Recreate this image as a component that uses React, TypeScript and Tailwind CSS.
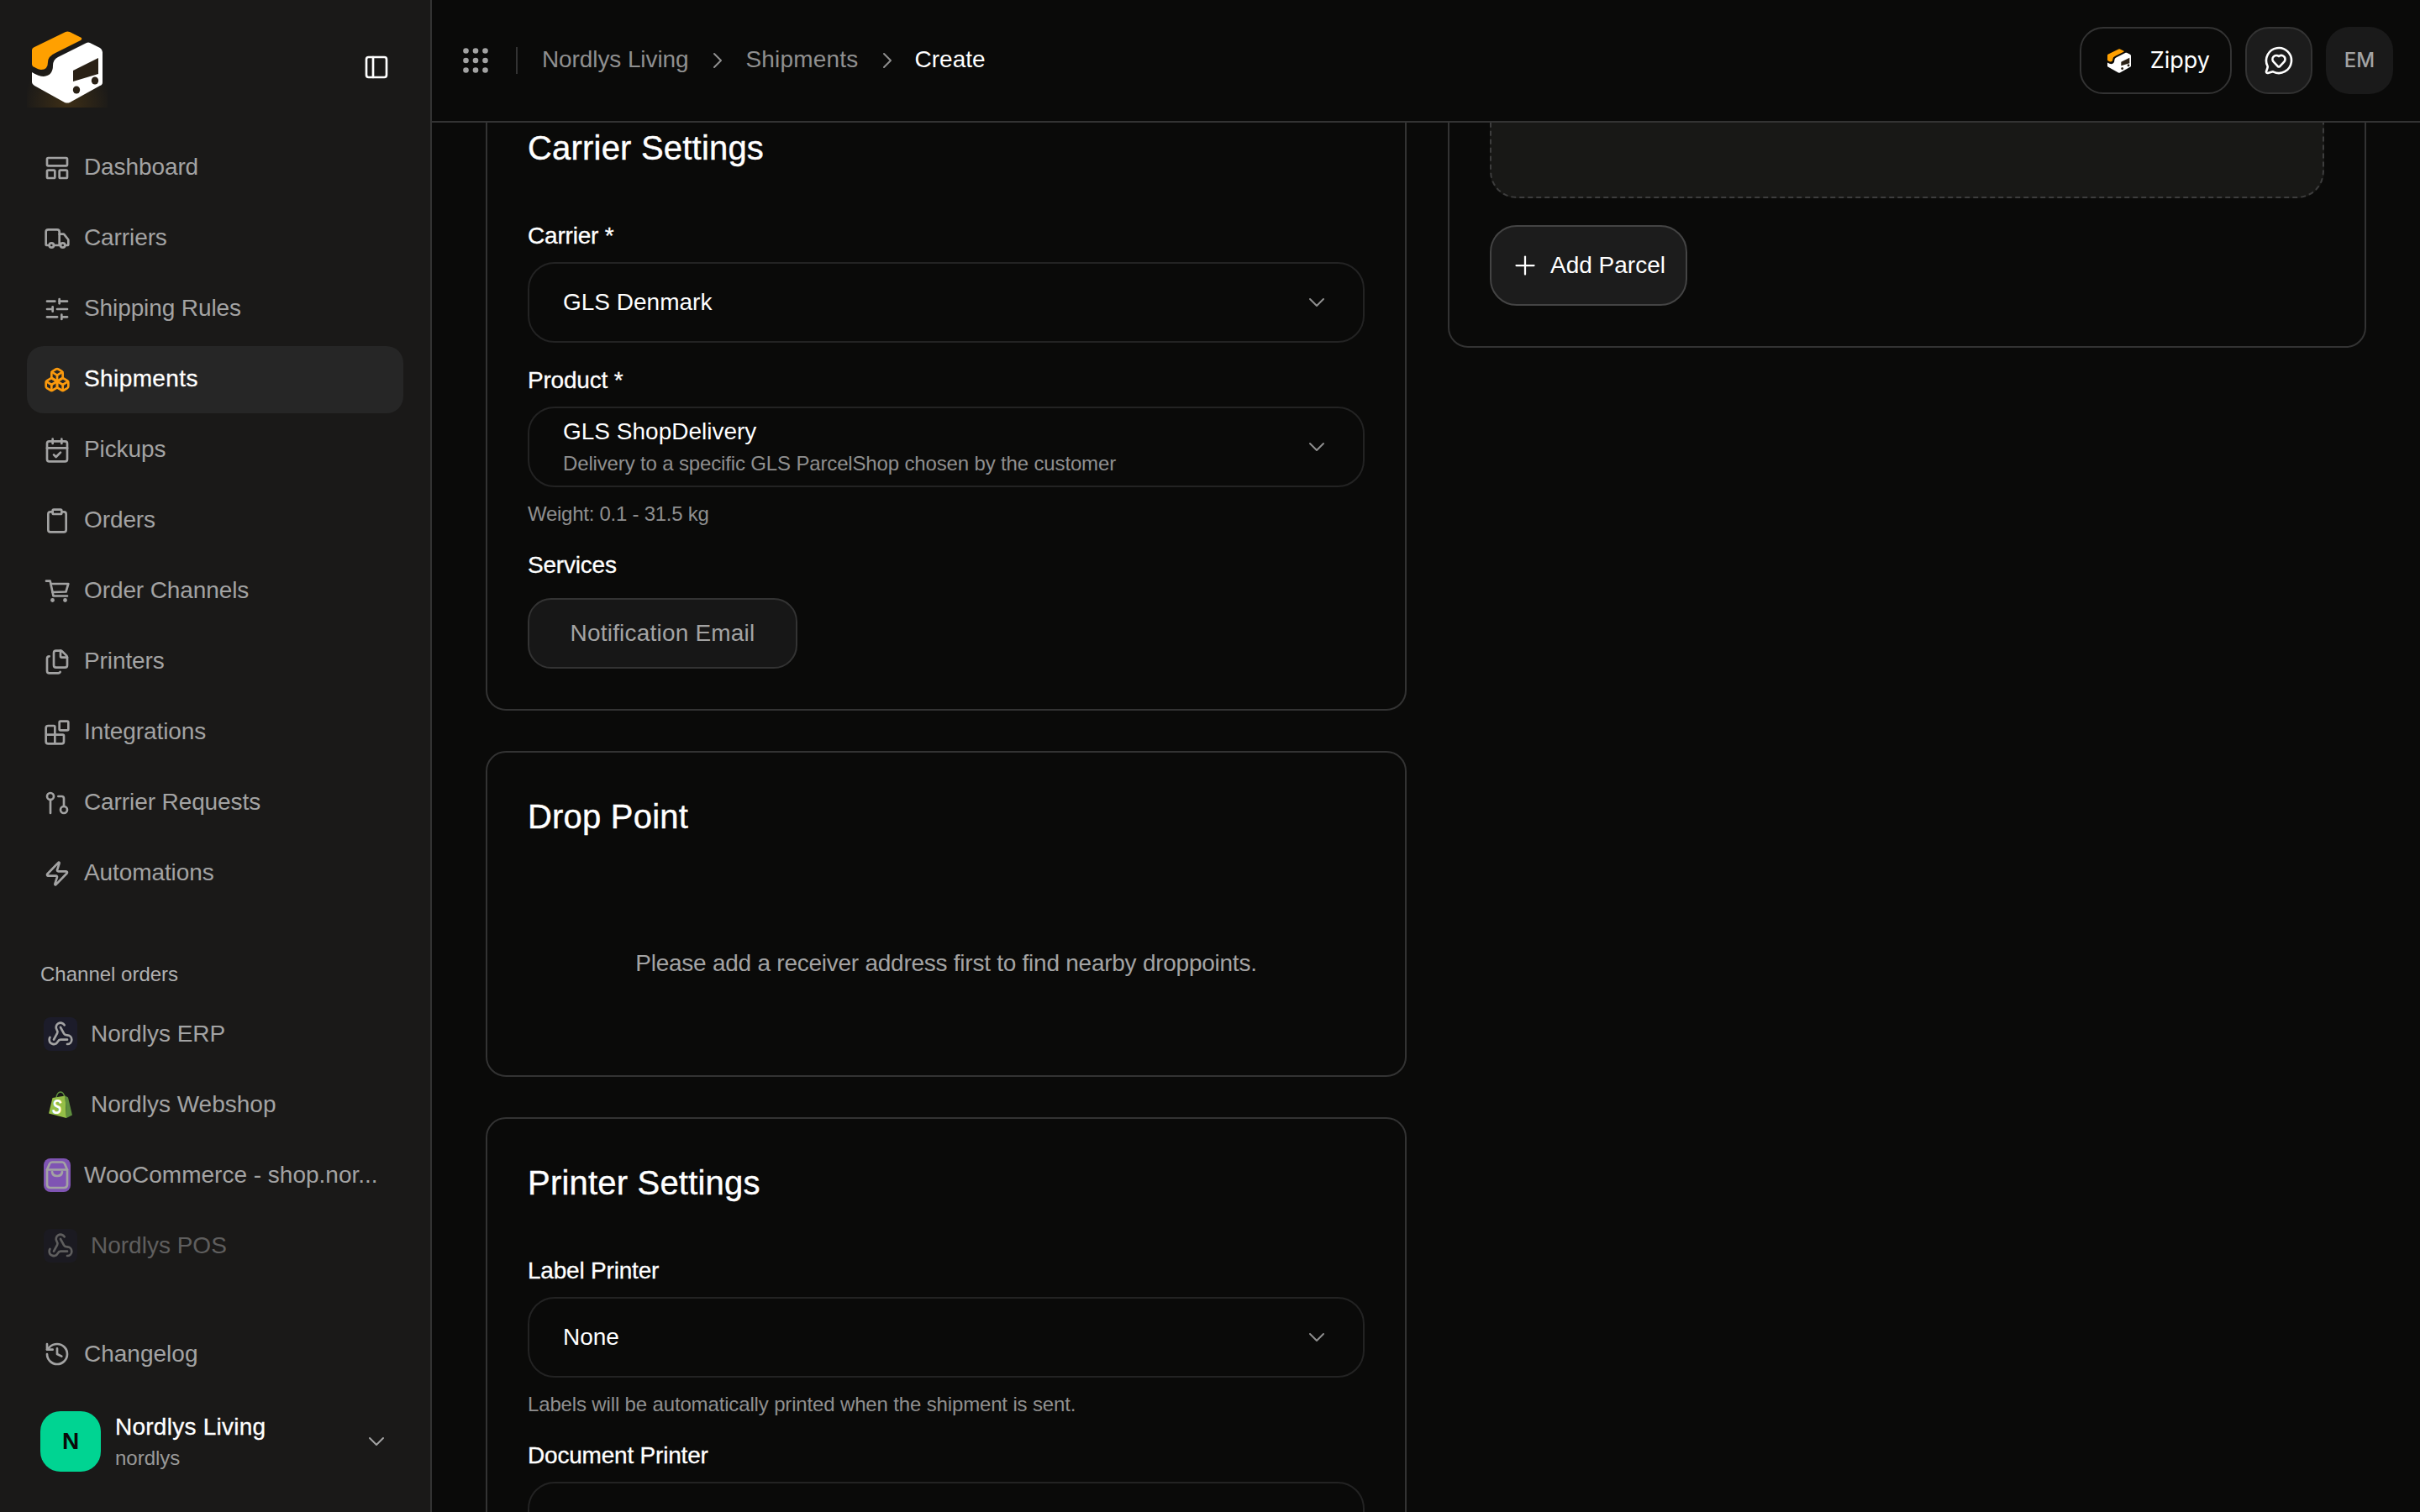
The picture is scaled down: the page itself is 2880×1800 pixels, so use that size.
import {
  Blocks,
  Boxes,
  CalendarCheck,
  ChevronDown,
  ChevronRight,
  Clipboard,
  Files,
  GitPullRequest,
  History,
  LayoutPanelTop,
  MessageCircleHeart,
  PanelLeft,
  Plus,
  SlidersHorizontal,
  Truck,
  Webhook,
  Zap,
} from "lucide-react"

function CartIcon({ className = "" }: { size?: number; strokeWidth?: number; className?: string }) {
  return (
    <svg viewBox="0 0 32 32" className={`w-[32px] h-[32px] ${className}`} fill="none" stroke="currentColor" strokeWidth="2.67" strokeLinecap="round" strokeLinejoin="round">
      <path d="M3 3.7 H7.7 L11.5 21.5 H28" />
      <path d="M8.6 7 H29.3 L26.5 16.5 L10.5 17" />
      <circle cx="10.5" cy="26.5" r="2.4" fill="currentColor" stroke="none" />
      <circle cx="25.5" cy="26.5" r="2.4" fill="currentColor" stroke="none" />
    </svg>
  )
}

const nav = [
  { label: "Dashboard", icon: LayoutPanelTop },
  { label: "Carriers", icon: Truck },
  { label: "Shipping Rules", icon: SlidersHorizontal },
  { label: "Shipments", icon: Boxes, active: true },
  { label: "Pickups", icon: CalendarCheck },
  { label: "Orders", icon: Clipboard },
  { label: "Order Channels", icon: CartIcon },
  { label: "Printers", icon: Files },
  { label: "Integrations", icon: Blocks },
  { label: "Carrier Requests", icon: GitPullRequest },
  { label: "Automations", icon: Zap },
]

function LogoShapes() {
  return (
    <>
      <path
        d="M38 60 Q38 57 41 56 L78 38 Q80 37 83 38 L97 45 Q98 47 96 48 L66 63 Q57 67 57 74 Q57 83 49 83 Q46 83 41 80 Q38 79 38 76 Z"
        fill="#ffa000"
      />
      <path
        d="M38 86 Q46 91 52 91 Q63 90 63 78 Q63 71 69 68 L103 51 Q105 50 107 51 L119 57 Q122 59 122 62 L122 98 Q122 101 119 102 L83 122 Q80 123 77 122 L41 102 Q38 100 38 98 Z"
        fill="#ffffff"
      />
      <path d="M87 84 L117 69 L117 88 L87 97 Z" fill="#2a2116" />
      <ellipse cx="91" cy="107" rx="4.2" ry="4.6" fill="#2a2116" />
      <ellipse cx="113" cy="96" rx="4.2" ry="4.6" fill="#2a2116" />
    </>
  )
}

function Logo() {
  return (
    <svg viewBox="32 32 96 96" className="w-[96px] h-[96px]">
      <defs>
        <radialGradient id="glow" cx="50%" cy="95%" r="55%">
          <stop offset="0%" stopColor="#f59e0b" stopOpacity="0.16" />
          <stop offset="100%" stopColor="#f59e0b" stopOpacity="0" />
        </radialGradient>
      </defs>
      <rect x="32" y="32" width="96" height="96" fill="url(#glow)" />
      <LogoShapes />
    </svg>
  )
}

function Shopify() {
  return (
    <svg viewBox="0 0 30 32" className="w-[30px] h-[32px]">
      <path d="M10 8 Q11 1 15 1 Q19 1 20 8" fill="none" stroke="#5e8e3e" strokeWidth="1.4" />
      <path d="M1 26.5 L5.5 8 L20.5 5.5 L22 32 Z" fill="#95bf47" />
      <path d="M20.5 5.5 L24 7.5 L29 28.5 L22 32 Z" fill="#5e8e3e" />
      <text
        x="5"
        y="26.5"
        fontSize="23"
        fontWeight="700"
        fontStyle="italic"
        fill="#ffffff"
        textLength="11.5"
        lengthAdjust="spacingAndGlyphs"
        fontFamily="'Liberation Sans', sans-serif"
      >
        S
      </text>
    </svg>
  )
}

function GridDots() {
  const points = [3.5, 15, 26.5]
  return (
    <svg viewBox="0 0 30 30" className="w-[30px] h-[30px]" fill="#a3a3a3">
      {points.map((y) => points.map((x) => <circle key={`${x}-${y}`} cx={x} cy={y} r="3.3" />))}
    </svg>
  )
}

function WooIcon() {
  return (
    <div className="w-[32px] h-[40px] shrink-0 rounded-[8px] bg-[#7f54b3]">
      <svg viewBox="0 0 32 40" className="w-[32px] h-[40px]" fill="none" stroke="#a3a3a3" strokeWidth="2.7" strokeLinecap="round" strokeLinejoin="round">
        <path d="M4 13.5 L7 6.5 Q8 4.5 10 4.5 H22 Q24 4.5 25 6.5 L28 13.5 V31 Q28 35 24 35 H8 Q4 35 4 31 Z" />
        <path d="M4 13.5 H28" />
        <path d="M10 16 Q10.5 21 16 21 Q21.5 21 22 16" />
      </svg>
    </div>
  )
}

function Field({ label, className = "", children }: { label: string; className?: string; children: React.ReactNode }) {
  return (
    <div className={className}>
      <div className="h-[40px] leading-[42px] text-[28px] text-white tracking-[-0.2px] [-webkit-text-stroke:0.3px_currentColor]">{label}</div>
      {children}
    </div>
  )
}

function Select({ value, sub }: { value?: string; sub?: string }) {
  return (
    <div className="mt-[12px] h-[96px] rounded-[32px] border-2 border-[#232323] flex items-center justify-between pl-[40px] pr-[39px]">
      <div>
        {value && <div className="text-[28px] leading-[36px] text-white">{value}</div>}
        {sub && <div className="text-[24px] leading-[32px] mt-[4px] text-[#8f8f8f] tracking-[-0.15px]">{sub}</div>}
      </div>
      <ChevronDown size={32} strokeWidth={1.5} className="text-[#8f8f8f]" />
    </div>
  )
}

function Card({ title, children }: { title: string; children: React.ReactNode }) {
  return (
    <section className="rounded-[24px] border-2 border-[#333333] p-[48px]">
      <h2 className="text-[40px] leading-[56px] text-white tracking-[0.2px] [-webkit-text-stroke:0.4px_currentColor]">{title}</h2>
      {children}
    </section>
  )
}

export default function App() {
  return (
    <div className="flex h-screen w-screen overflow-hidden bg-[#0a0a09] text-[28px]" style={{ fontFamily: "'Liberation Sans', sans-serif" }}>
      {/* Sidebar */}
      <aside className="w-[514px] shrink-0 h-full flex flex-col bg-[#1a1918] border-r-2 border-[#333333] pb-[48px]">
        <div className="flex items-center justify-between pl-[32px] pr-[48px] pt-[32px] mb-[32px]">
          <Logo />
          <PanelLeft size={32} strokeWidth={2} className="text-white" />
        </div>

        <nav className="flex flex-col gap-[4px] px-[32px]">
          {nav.map((item) => {
            const Icon = item.icon
            return (
              <div
                key={item.label}
                className={`h-[80px] flex items-center gap-[16px] pl-[20px] rounded-[20px] ${item.active ? "bg-[#262626] text-white tracking-[0.4px] [-webkit-text-stroke:0.3px_currentColor]" : "text-[#a3a3a3] tracking-[-0.1px]"}`}
              >
                <Icon size={32} strokeWidth={2} className={item.active ? "text-[#fb9a0e]" : ""} />
                <span className="pb-[2px]">{item.label}</span>
              </div>
            )
          })}
        </nav>

        <div className="mt-[64px] pl-[48px] h-[32px] leading-[32px] text-[24px] text-[#b0b0b0]">Channel orders</div>
        <div className="mt-[15px] flex flex-col gap-[4px] px-[32px] text-[#a3a3a3]">
          <div className="h-[80px] flex items-center gap-[16px] pl-[20px]">
            <div className="w-[40px] h-[40px] rounded-[8px] bg-[#1c1c2a] flex items-center justify-center">
              <Webhook size={32} strokeWidth={2} />
            </div>
            <span>Nordlys ERP</span>
          </div>
          <div className="h-[80px] flex items-center gap-[16px] pl-[20px]">
            <div className="w-[40px] h-[40px] flex items-center justify-center">
              <Shopify />
            </div>
            <span>Nordlys Webshop</span>
          </div>
          <div className="h-[80px] flex items-center gap-[16px] pl-[20px]">
            <WooIcon />
            <span className="whitespace-nowrap">WooCommerce - shop.nor...</span>
          </div>
          <div className="h-[80px] flex items-center gap-[16px] pl-[20px] opacity-50">
            <div className="w-[40px] h-[40px] rounded-[8px] bg-[#1c1c2a] flex items-center justify-center">
              <Webhook size={32} strokeWidth={2} />
            </div>
            <span>Nordlys POS</span>
          </div>
        </div>

        <div className="mt-auto px-[32px]">
          <div className="h-[80px] flex items-center gap-[16px] pl-[20px] text-[#a3a3a3]">
            <History size={32} strokeWidth={2} />
            <span>Changelog</span>
          </div>
        </div>
        <div className="mt-[28px] flex items-center pl-[48px] pr-[48px]">
          <div className="w-[72px] h-[72px] rounded-[24px] bg-[#00d492] flex items-center justify-center text-[28px] font-bold text-[#0a0a0a]">N</div>
          <div className="ml-[17px]">
            <div className="text-[28px] leading-[36px] text-white tracking-[0.25px] [-webkit-text-stroke:0.3px_currentColor]">Nordlys Living</div>
            <div className="text-[24px] leading-[32px] mt-[3px] text-[#999999]">nordlys</div>
          </div>
          <ChevronDown size={32} strokeWidth={1.5} className="ml-auto text-[#a3a3a3]" />
        </div>
      </aside>

      <div className="flex-1 min-w-0 flex flex-col">
        {/* Top bar */}
        <header className="h-[146px] shrink-0 border-b-2 border-[#333333] flex items-center justify-between pl-[37px] pr-[32px]">
          <div className="flex items-center">
            <GridDots />
            <div className="w-[2px] h-[32px] bg-[#333333] ml-[33px] mr-[29px]" />
            <span className="text-[#8f8f8f] tracking-[-0.1px] pb-[2px]">Nordlys Living</span>
            <ChevronRight size={32} strokeWidth={1.5} className="text-[#8f8f8f] ml-[19px] mr-[17px]" />
            <span className="text-[#8f8f8f] tracking-[0.2px] pb-[2px]">Shipments</span>
            <ChevronRight size={32} strokeWidth={1.5} className="text-[#8f8f8f] ml-[18px] mr-[17px]" />
            <span className="text-white pb-[2px]">Create</span>
          </div>
          <div className="flex items-center gap-[16px]" style={{ fontFamily: "Inter, sans-serif" }}>
            <div className="h-[80px] rounded-[28px] border-2 border-[#333333] flex items-center pl-[31px] pr-[24px] gap-[23px] text-white text-[27px]">
              <svg viewBox="38 37 84 86" className="w-[28px] h-[29px]">
                <LogoShapes />
              </svg>
              <span>Zippy</span>
            </div>
            <div className="w-[80px] h-[80px] rounded-[28px] border-2 border-[#333333] bg-[#1c1c1c] flex items-center justify-center">
              <MessageCircleHeart size={36} strokeWidth={1.75} className="text-white" />
            </div>
            <div className="w-[80px] h-[80px] rounded-[28px] bg-[#1a1a1a] flex items-center justify-center text-[24px] font-medium text-[#a3a3a3]">EM</div>
          </div>
        </header>

        {/* Form, scrolled */}
        <main className="flex-1 min-h-0 overflow-hidden px-[64px]">
          <div className="grid grid-cols-[1096px_minmax(0,1fr)] gap-[49px] items-start -mt-[48px]">
            <div className="flex flex-col gap-[48px]">
              <Card title="Carrier Settings">
                <Field label="Carrier *" className="mt-[56px]">
                  <Select value="GLS Denmark" />
                </Field>
                <Field label="Product *" className="mt-[24px]">
                  <Select value="GLS ShopDelivery" sub="Delivery to a specific GLS ParcelShop chosen by the customer" />
                </Field>
                <div className="mt-[16px] text-[24px] leading-[32px] text-[#8f8f8f] tracking-[-0.26px]">Weight: 0.1 - 31.5 kg</div>
                <Field label="Services" className="mt-[24px]">
                  <div className="mt-[20px] w-[321px] h-[84px] rounded-[28px] border-2 border-[#333333] bg-[#171717] flex items-center justify-center text-[#a3a3a3] tracking-[0.2px]">
                    Notification Email
                  </div>
                </Field>
              </Card>

              <Card title="Drop Point">
                <p className="mt-[127px] mb-[65px] leading-[40px] text-center text-[#a3a3a3] tracking-[-0.25px]">Please add a receiver address first to find nearby droppoints.</p>
              </Card>

              <Card title="Printer Settings">
                <Field label="Label Printer" className="mt-[56px]">
                  <Select value="None" />
                </Field>
                <div className="mt-[16px] text-[24px] leading-[32px] text-[#8f8f8f] tracking-[-0.15px]">Labels will be automatically printed when the shipment is sent.</div>
                <Field label="Document Printer" className="mt-[24px]">
                  <Select />
                </Field>
              </Card>
            </div>

            <section className="-mt-[100px] rounded-[24px] border-2 border-[#333333] p-[48px]">
              <div className="h-[188px] rounded-[32px] border-2 border-dashed border-[#3d3d3d] bg-[#181816]" />
              <div className="mt-[32px] w-fit h-[96px] rounded-[32px] border-2 border-[#444444] bg-[#1c1c1c] flex items-center gap-[12px] pl-[22px] pr-[24px] text-white">
                <Plus size={36} strokeWidth={1.5} />
                <span>Add Parcel</span>
              </div>
            </section>
          </div>
        </main>
      </div>
    </div>
  )
}
